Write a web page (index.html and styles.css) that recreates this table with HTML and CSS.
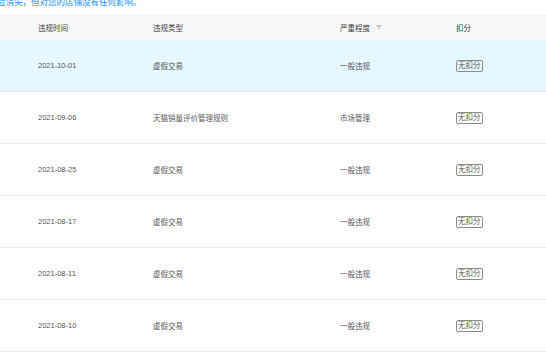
FILE: index.html
```html
<!DOCTYPE html>
<html lang="zh-CN">
<head>
<meta charset="utf-8">
<link rel="stylesheet" href="styles.css">
</head>
<body>
<div class="notebar"><p class="note">会消失，但对您的店铺没有任何影响。</p></div>
<div class="table">
  <div class="row head">
    <div class="cell">违规时间</div>
    <div class="cell">违规类型</div>
    <div class="cell">严重程度 <svg class="filter" viewBox="0 0 6 5" width="6" height="5"><path d="M0 0H6L3.6 2.6V5L2.4 4.4V2.6Z" fill="#bfbfbf"/></svg></div>
    <div class="cell">扣分</div>
  </div>
  <div class="row active">
    <div class="cell">2021-10-01</div>
    <div class="cell">虚假交易</div>
    <div class="cell">一般违规</div>
    <div class="cell"><span class="badge">无扣分</span></div>
  </div>
  <div class="row">
    <div class="cell">2021-09-06</div>
    <div class="cell">天猫销量评价管理规则</div>
    <div class="cell">市场管理</div>
    <div class="cell"><span class="badge">无扣分</span></div>
  </div>
  <div class="row">
    <div class="cell">2021-08-25</div>
    <div class="cell">虚假交易</div>
    <div class="cell">一般违规</div>
    <div class="cell"><span class="badge">无扣分</span></div>
  </div>
  <div class="row">
    <div class="cell">2021-08-17</div>
    <div class="cell">虚假交易</div>
    <div class="cell">一般违规</div>
    <div class="cell"><span class="badge">无扣分</span></div>
  </div>
  <div class="row">
    <div class="cell">2021-08-11</div>
    <div class="cell">虚假交易</div>
    <div class="cell">一般违规</div>
    <div class="cell"><span class="badge">无扣分</span></div>
  </div>
  <div class="row">
    <div class="cell">2021-08-10</div>
    <div class="cell">虚假交易</div>
    <div class="cell">一般违规</div>
    <div class="cell"><span class="badge">无扣分</span></div>
  </div>
</div>
</body>
</html>
```

FILE: styles.css
```css
html, body {
  margin: 0;
  padding: 0;
  background: #fff;
}
body {
  font-family: "Liberation Sans", "Noto Sans CJK SC", sans-serif;
  font-size: 7.5px;
  color: #595959;
  overflow: hidden;
}
.notebar {
  height: 15px;
  overflow: hidden;
}
.note {
  margin: -3px 0 0 -3px;
  font-size: 8.5px;
  line-height: 10px;
  color: #1890ff;
  white-space: nowrap;
}
.table {
  display: flex;
  flex-direction: column;
}
.row {
  display: grid;
  grid-template-columns: 115px 187px 116px 1fr;
  padding-left: 38px;
  height: 52px;
  align-items: center;
  border-bottom: 1px solid #ebebeb;
  box-sizing: border-box;
}
.row.head {
  height: 25px;
  background: #f7f8fa;
  border-bottom: none;
  color: #404040;
}
.row.active {
  background: #e6f7ff;
}
.cell {
  white-space: nowrap;
  display: flex;
  align-items: center;
}
.filter {
  margin-left: 6px;
}
.badge {
  display: inline-block;
  border: 1px solid #8c8c8c;
  border-radius: 2px;
  padding: 0 1px;
  line-height: 10px;
  color: #595959;
}
```
